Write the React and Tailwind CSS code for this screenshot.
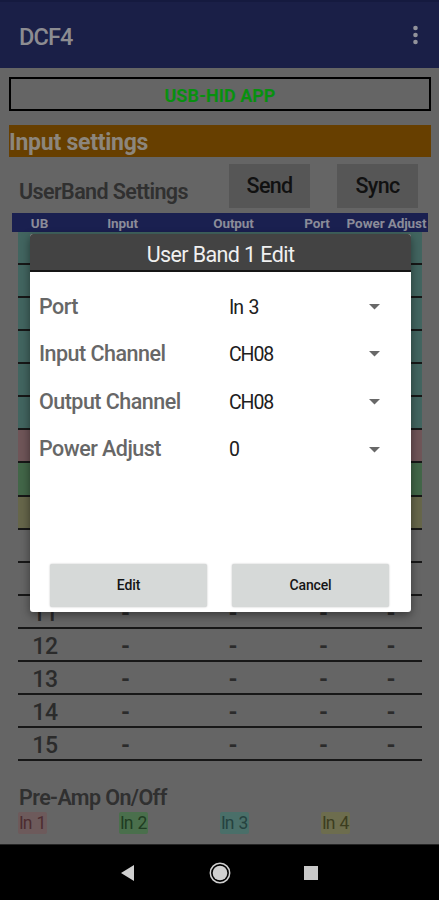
import React from "react";

const rows = [
  ...Array.from({ length: 6 }, () => ({ color: "bg-[#426560]", label: "" })),
  { color: "bg-[#6f5558]", label: "" },
  { color: "bg-[#426648]", label: "" },
  { color: "bg-[#66664a]", label: "" },
  { color: "", label: "" },
  { color: "", label: "" },
  { color: "", label: "11" },
  { color: "", label: "12" },
  { color: "", label: "13" },
  { color: "", label: "14" },
  { color: "", label: "15" },
];

const fields = [
  ["Port", "In 3"],
  ["Input Channel", "CH08"],
  ["Output Channel", "CH08"],
  ["Power Adjust", "0"],
];

const inputs = [
  ["In 1", "bg-[#6d5a5b] text-[#4c2c30]"],
  ["In 2", "bg-[#4a6f4c] text-[#203c22]"],
  ["In 3", "bg-[#4a6f69] text-[#25423f]"],
  ["In 4", "bg-[#6d6d4e] text-[#3c3d20]"],
];

function Row({ color, label }) {
  return (
    <div className={`grid h-[33.07px] grid-cols-[54px_107px_108px_73px_62px] items-center border-b-2 border-[#171717] pt-[4px] text-center text-[23px] font-medium leading-none tracking-[-0.3px] text-[#2b2b2b] ${color}`}>
      <span>{label}</span>
      {[0, 1, 2, 3].map((i) => (
        <span key={i} className="font-bold">{label && "-"}</span>
      ))}
    </div>
  );
}

function Dialog() {
  return (
    <section className="absolute left-[30px] top-[234px] flex h-[378px] w-[381px] flex-col overflow-hidden rounded-[3px] bg-white shadow-[0_3px_10px_rgba(0,0,0,0.45)]">
      <h2 className="h-[38px] shrink-0 border-b-2 border-[#151515] bg-[#434343] text-center text-[21.5px] leading-[41px] tracking-[-0.6px] text-[#f0f0f0]">
        User Band 1 Edit
      </h2>
      <div className="flex flex-col pt-[11px]">
        {fields.map(([name, value]) => (
          <div key={name} className="flex h-[47.6px] items-center pl-[9px] pr-[31px]">
            <span className="w-[190px] text-[21.5px] font-medium tracking-[-0.52px] text-[#676767]">{name}</span>
            <span className="flex-1 pt-px text-[19.5px] tracking-[-1.1px] [word-spacing:2px] text-[#202020]">{value}</span>
            <svg width="11" height="6" viewBox="0 0 11 6" fill="#686868">
              <path d="M0 0h11L5.5 5.5z" />
            </svg>
          </div>
        ))}
      </div>
      <div className="mt-auto flex gap-[25px] pb-[5px] pl-[20px]">
        {["Edit", "Cancel"].map((t) => (
          <button key={t} className="h-[43px] w-[157px] rounded-[2px] bg-[#d6d9d8] text-[14px] font-medium tracking-[-0.15px] text-[#151515] shadow-[0_0_2px_rgba(0,0,0,0.25)]">
            {t}
          </button>
        ))}
      </div>
    </section>
  );
}

export default function App() {
  return (
    <div className="relative flex h-[900px] w-[439px] flex-col overflow-hidden bg-[#656565] font-[Roboto,sans-serif]">
      <header className="flex h-[68px] shrink-0 items-center justify-between border-t-2 border-[#151a3f] bg-[#1a1f47] pl-[19px] pr-[21px] pt-[5px]">
        <h1 className="text-[23.5px] font-medium tracking-[-0.9px] text-[#8c8c91]">DCF4</h1>
        <svg className="-mt-[5px]" width="5" height="20" viewBox="0 0 5 20" fill="#92939b">
          <circle cx="2.5" cy="3" r="2.3" />
          <circle cx="2.5" cy="10" r="2.3" />
          <circle cx="2.5" cy="17" r="2.3" />
        </svg>
      </header>
      <main className="flex h-[776px] shrink-0 flex-col">
        <div className="ml-[9px] mt-[9px] h-[34px] w-[422px] border-2 border-black text-center text-[18px] font-bold leading-[33px] text-[#08900f]">
          USB-HID APP
        </div>
        <div className="ml-[9px] mt-[14px] h-[32px] w-[422px] bg-[#673f00] text-[23px] font-bold leading-[35px] tracking-[-0.25px] text-[#8c867d]">
          Input settings
        </div>
        <div className="mt-[7px] flex h-[44px] pl-[19px] text-[21.5px] font-medium">
          <span className="w-[210px] pt-[5px] font-semibold leading-[45px] tracking-[-0.6px] text-[#303030]">UserBand Settings</span>
          <button className="h-[44px] w-[81px] bg-[#565656] pt-px tracking-[-0.7px] text-[#111]">Send</button>
          <button className="ml-[27px] h-[44px] w-[81px] bg-[#565656] pt-px tracking-[-0.7px] text-[#111]">Sync</button>
        </div>
        <div className="ml-[12px] mt-[5px] grid h-[19px] w-[416px] shrink-0 grid-cols-[55px_111px_111px_56px_83px] bg-[#1a2050] text-center text-[13.5px] font-bold leading-[21px] tracking-[-0.1px] text-[#8b8c99]">
          <span>UB</span>
          <span>Input</span>
          <span>Output</span>
          <span>Port</span>
          <span className="whitespace-nowrap">Power Adjust</span>
        </div>
        <div className="ml-[18px] w-[404px]">
          {rows.map((r, i) => (
            <Row key={i} {...r} />
          ))}
        </div>
        <h3 className="mt-[22px] pl-[19px] text-[21.5px] font-semibold leading-[29px] tracking-[-0.6px] text-[#303030]">Pre-Amp On/Off</h3>
        <div className="flex pl-[18px]">
          {inputs.map(([t, c]) => (
            <div key={t} className="w-[101px]">
              <span className={`inline-block h-[22px] rounded-[2px] px-px text-[17.5px] leading-[23px] tracking-[-0.9px] [word-spacing:1.5px] ${c}`}>{t}</span>
            </div>
          ))}
        </div>
      </main>
      <footer className="flex h-[56px] shrink-0 items-center border-t border-[#252525] bg-black pl-[121px]">
        <svg width="14" height="16" viewBox="0 0 14 16" fill="#d0d0d0">
          <path d="M0 8L13 0v16z" />
        </svg>
        <svg className="ml-[74px]" width="22" height="22" viewBox="0 0 22 22">
          <circle cx="11" cy="11" r="9.7" fill="none" stroke="#d0d0d0" strokeWidth="1.5" />
          <circle cx="11" cy="11" r="7.3" fill="#d0d0d0" />
        </svg>
        <span className="ml-[73px] h-[14px] w-[14px] bg-[#c8c8c8]" />
      </footer>
      <Dialog />
    </div>
  );
}
